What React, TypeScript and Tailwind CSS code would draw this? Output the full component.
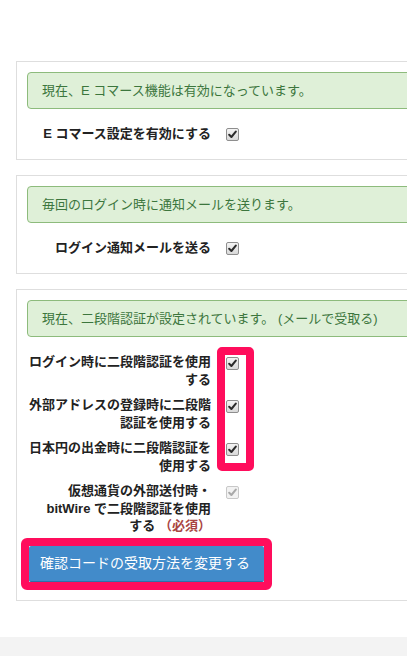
import React from 'react';

const font = "font-['Liberation_Sans','Noto_Sans_CJK_JP',sans-serif]";

const CheckBox = ({ disabled = false }: { disabled?: boolean }) => (
  <span
    className={`mt-[4px] flex h-[13px] w-[13px] shrink-0 items-center justify-center rounded-[2px] border ${
      disabled ? 'border-[#c8c8c8] bg-[#f2f2f2]' : 'border-[#8e8e8e] bg-gradient-to-b from-[#f4f4f4] to-[#d9d9d9]'
    }`}
  >
    <svg width="9" height="9" viewBox="0 0 9 9">
      <path
        d="M1.2 4.8 L3.4 7 L7.8 1.6"
        fill="none"
        stroke={disabled ? '#a9a9a9' : '#2b2b2b'}
        strokeWidth="2"
        strokeLinecap="round"
        strokeLinejoin="round"
      />
    </svg>
  </span>
);

const Alert = ({ children }: { children: React.ReactNode }) => (
  <div className="flex h-[37px] items-center rounded-[4px] border border-[#8dbb7c] bg-[#dff0d8] px-[14px] text-[13px] text-[#3c763d] whitespace-nowrap">
    {children}
  </div>
);

const Panel = ({ children, className = '' }: { children: React.ReactNode; className?: string }) => (
  <div className={`ml-[16px] w-[440px] border border-[#dedede] bg-white px-[10px] pt-[10px] ${className}`}>
    {children}
  </div>
);

const Row = ({ label, disabled, tall }: { label: React.ReactNode; disabled?: boolean; tall?: boolean }) => (
  <div className={`flex items-start ${tall ? 'leading-[20px]' : 'leading-[17.5px]'}`}>
    <div className="w-[184px] text-right text-[13px] font-bold text-[#222]">{label}</div>
    <div className="ml-[15px]">
      <CheckBox disabled={disabled} />
    </div>
  </div>
);

export default function App() {
  return (
    <div className={`${font} w-[407px] overflow-hidden bg-white`}>
      <div className="h-[61px]" />

      <Panel className="pb-[15px]">
        <Alert>現在、E コマース機能は有効になっています。</Alert>
        <div className="mt-[15px]">
          <Row tall label="E コマース設定を有効にする" />
        </div>
      </Panel>

      <Panel className="mt-[15px] pb-[15px]">
        <Alert>毎回のログイン時に通知メールを送ります。</Alert>
        <div className="mt-[15px]">
          <Row tall label="ログイン通知メールを送る" />
        </div>
      </Panel>

      <Panel className="mt-[15px] pb-[10px]">
        <Alert>現在、二段階認証が設定されています。 (メールで受取る)</Alert>
        <div className="relative mt-[16px] flex flex-col gap-[8px]">
          <Row label="ログイン時に二段階認証を使用する" />
          <Row label="外部アドレスの登録時に二段階認証を使用する" />
          <Row label="日本円の出金時に二段階認証を使用する" />
          <Row
            disabled
            label={
              <>
                仮想通貨の外部送付時・
                <br />
                bitWire で二段階認証を使用
                <br />
                する <span className="text-[#a94442]">（必須）</span>
              </>
            }
          />
          <div className="pointer-events-none absolute left-[190px] top-[-6px] h-[124px] w-[37px] rounded-[5px] border-[8px] border-[#ff0d5c]" />
        </div>
        <div className="-ml-[6px] mt-[3px] w-[251px] rounded-[6px] border-[8px] border-[#ff0d5c] bg-white">
          <button className="flex h-[36px] w-full items-center rounded-[2px] border-b border-[#2f6fa8] bg-[#428bca] pl-[11px] text-[14px] text-white">
            確認コードの受取方法を変更する
          </button>
        </div>
      </Panel>

      <div className="mt-[36px] h-[19px] bg-[#f3f3f3]" />
    </div>
  );
}
